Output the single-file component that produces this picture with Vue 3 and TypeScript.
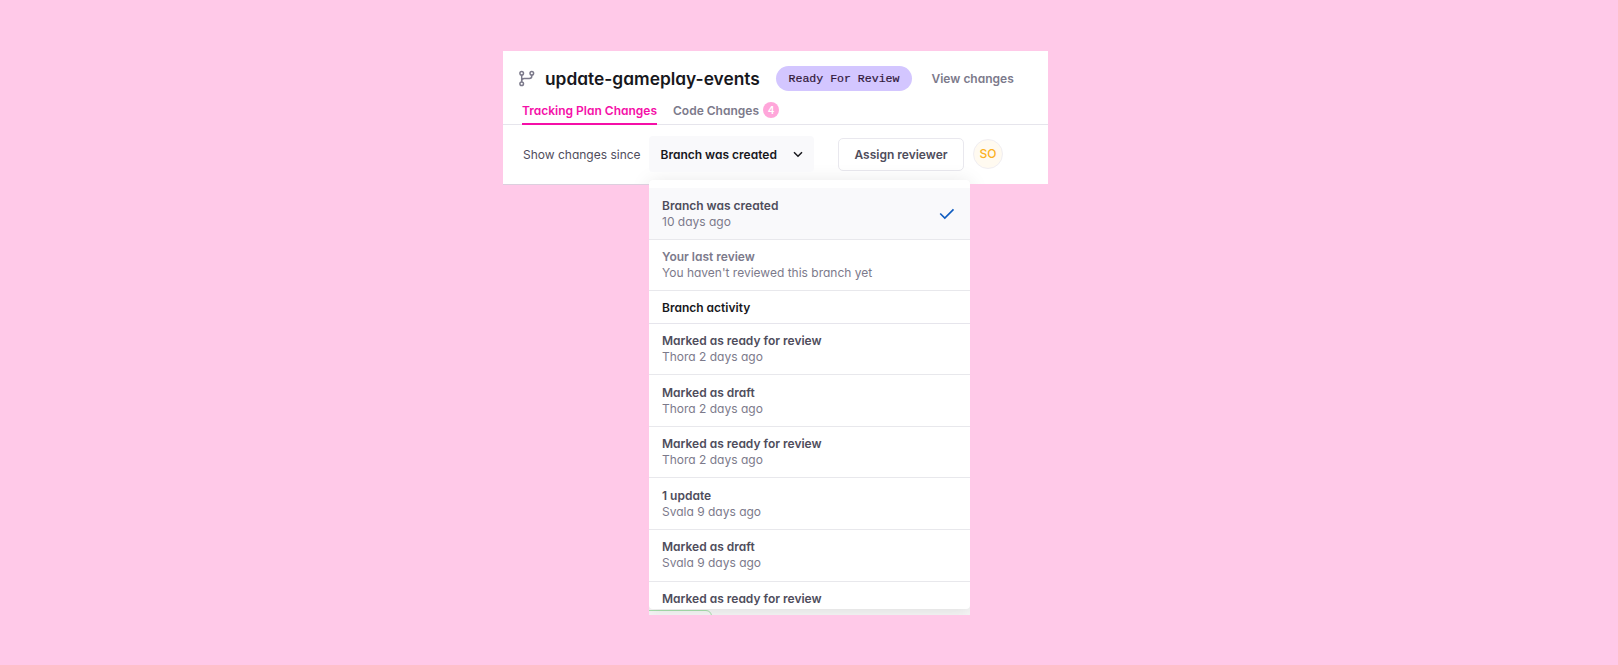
<script setup lang="ts">
interface Entry {
  title: string
  detail?: string
  state?: 'selected' | 'muted'
}

const baselines: Entry[] = [
  { title: 'Branch was created', detail: '10 days ago', state: 'selected' },
  { title: 'Your last review', detail: "You haven't reviewed this branch yet", state: 'muted' },
]

const activity: Entry[] = [
  { title: 'Marked as ready for review', detail: 'Thora 2 days ago' },
  { title: 'Marked as draft', detail: 'Thora 2 days ago' },
  { title: 'Marked as ready for review', detail: 'Thora 2 days ago' },
  { title: '1 update', detail: 'Svala 9 days ago' },
  { title: 'Marked as draft', detail: 'Svala 9 days ago' },
  { title: 'Marked as ready for review' },
]
</script>

<template>
  <main class="stage">
    <section class="card">
      <header class="heading">
        <svg class="branch" width="18" height="18" viewBox="0 0 18 18" fill="none" stroke="#7c7a8b" stroke-width="1.5">
          <circle cx="3.700" cy="3.300" r="1.800" />
          <circle cx="3.700" cy="13.800" r="1.800" />
          <circle cx="13.800" cy="3.300" r="1.800" />
          <path d="M3.700 5.100v6.900M13.800 5.100v.9q0 2.500-2.500 2.500H6.200Q3.700 8.500 3.700 11" />
        </svg>
        <h1>update-gameplay-events</h1>
        <span class="status">Ready For Review</span>
        <a class="view">View changes</a>
      </header>
      <nav class="tabs">
        <a class="tab active"><span>Tracking Plan Changes</span></a>
        <a class="tab"><span>Code Changes</span><b class="count">4</b></a>
      </nav>
      <div class="filters">
        <span class="label">Show changes since</span>
        <div class="picker">
          <button class="select">
            <span>Branch was created</span>
            <svg width="10" height="7" viewBox="0 0 10 7" fill="none" stroke="#17171c" stroke-width="1.5">
              <path d="M1 1.200l4 4 4-4" />
            </svg>
          </button>
          <div class="viewport">
            <div class="peek"></div>
            <div class="menu">
              <div v-for="entry in baselines" :key="entry.title" class="entry" :class="entry.state">
                <div>
                  <div class="title">{{ entry.title }}</div>
                  <div class="detail">{{ entry.detail }}</div>
                </div>
                <svg v-if="entry.state === 'selected'" class="check" width="16" height="12" viewBox="0 0 16 12" fill="none" stroke="#0f5cc0" stroke-width="1.6">
                  <path d="M1.200 5.500l4.600 4.600L14.500 1.400" />
                </svg>
              </div>
              <div class="group">Branch activity</div>
              <div v-for="(entry, i) in activity" :key="i" class="entry">
                <div>
                  <div class="title">{{ entry.title }}</div>
                  <div v-if="entry.detail" class="detail">{{ entry.detail }}</div>
                </div>
              </div>
            </div>
          </div>
        </div>
        <button class="assign">Assign reviewer</button>
        <span class="avatar">SO</span>
      </div>
      <div class="shade"></div>
    </section>
  </main>
</template>

<style>
body {
  background: #ffc9e8;
}
</style>

<style scoped>
.stage {
  box-sizing: border-box;
  height: 665px;
  padding: 51px 0 0 503px;
  overflow: hidden;
  background: #ffc9e8;
  font-family: Inter, "Liberation Sans", sans-serif;
  font-feature-settings: "cv11";
  font-size: 12px;
  color: #4f4d5c;
}
.stage * {
  box-sizing: border-box;
  white-space: nowrap;
}
button {
  font: inherit;
  font-feature-settings: inherit;
  letter-spacing: inherit;
  color: inherit;
  padding: 0;
}
.card {
  position: relative;
  width: 545px;
  height: 133px;
  background: #fff;
}
.card::after {
  content: "";
  position: absolute;
  top: 100%;
  left: 0;
  width: 146px;
  height: 1px;
  background: #dccfde;
}
.shade {
  position: absolute;
  inset: 0;
  overflow: hidden;
}
.shade::before {
  content: "";
  position: absolute;
  top: 129px;
  left: 146px;
  width: 321px;
  height: 429px;
  border-radius: 4px;
  box-shadow: 0 2px 20px rgba(0, 0, 0, 0.1);
}
.heading {
  display: flex;
  align-items: center;
  height: 46px;
  padding: 9px 0 0 15px;
}
.branch {
  flex: none;
}
h1 {
  width: 216px;
  margin: 0 0 0 9px;
  font-size: 17.35px;
  line-height: 24px;
  font-weight: 600;
  color: #17171c;
}
.status {
  width: 136px;
  height: 25px;
  margin-left: 15px;
  border-radius: 13px;
  background: #d3c6ff;
  color: #2f1638;
  font: 11.55px/25px "Liberation Mono", monospace;
  -webkit-text-stroke: 0.2px #2f1638;
  text-align: center;
}
.view {
  margin-left: 19.5px;
  font-weight: 600;
  color: #7c7a8b;
}
.tabs {
  display: flex;
  gap: 16px;
  height: 28px;
  padding-left: 19px;
  border-bottom: 1px solid #e6e5ec;
}
.tab {
  display: flex;
  align-items: center;
  height: 28px;
  border-bottom: 2px solid transparent;
  font-weight: 600;
  color: #7c7a8b;
}
.tab.active {
  color: #f50fa8;
  border-color: #f50fa8;
}
.count {
  width: 16px;
  height: 16px;
  margin: -1px 0 0 4px;
  border-radius: 50%;
  background: #ffa6da;
  color: #fff;
  font-size: 10px;
  line-height: 16px;
  font-weight: 600;
  text-align: center;
}
.filters {
  display: flex;
  align-items: center;
  height: 59px;
  padding-left: 20px;
}
.label {
  width: 126px;
  padding-bottom: 1px;
}
.picker {
  position: relative;
  z-index: 1;
  width: 165px;
  height: 37px;
}
.select {
  display: flex;
  align-items: center;
  justify-content: space-between;
  width: 165px;
  height: 36px;
  padding: 0 11px 0 11.5px;
  border: 0;
  border-radius: 4px;
  background: #f9f9fb;
  font-weight: 600;
  color: #17171c;
}
.viewport {
  position: absolute;
  top: 44px;
  left: 0;
  width: 321px;
  height: 435px;
  overflow: hidden;
  border-radius: 4px 4px 0 0;
}
.peek {
  position: absolute;
  inset: 60px 0 0 0;
  overflow: hidden;
  background: #f6f6f6;
}
.peek::after {
  content: "";
  position: absolute;
  left: -20px;
  bottom: -17px;
  width: 81px;
  height: 20px;
  border: 1px solid #a9dfad;
  border-radius: 6px;
}
.menu {
  position: absolute;
  top: 0;
  left: 0;
  width: 321px;
  height: 429px;
  padding-top: 8px;
  overflow: hidden;
  border-radius: 4px;
  background: #fff;
  box-shadow: 0 2px 16px rgba(0, 0, 0, 0.1);
}
.entry {
  display: flex;
  justify-content: space-between;
  height: 51.6px;
  padding: 8.5px 15px 0 13px;
  border-bottom: 1px solid #e8e8ec;
}
.entry:last-child {
  border-bottom: 0;
}
.title {
  line-height: 17px;
  font-weight: 600;
}
.detail {
  line-height: 16.6px;
  color: #7c7a8b;
}
.selected {
  background: #f9f9fb;
}
.muted .title {
  color: #7c7a8b;
}
.check {
  margin-top: 11px;
}
.group {
  height: 32.4px;
  padding-left: 13px;
  border-bottom: 1px solid #e6e5ec;
  line-height: 33px;
  font-weight: 600;
  color: #17171c;
}
.assign {
  width: 126px;
  height: 33px;
  margin-left: 24px;
  padding-bottom: 1px;
  border: 1.5px solid #e9e8ee;
  border-radius: 5px;
  background: #fff;
  font-weight: 600;
}
.avatar {
  width: 30px;
  height: 30px;
  margin: -1px 0 0 9px;
  border: 1px solid #f0eef2;
  border-radius: 50%;
  background: #fffaf0;
  color: #fbb021;
  font-size: 12px;
  line-height: 28px;
  text-align: center;
  font-weight: 500;
}
</style>
